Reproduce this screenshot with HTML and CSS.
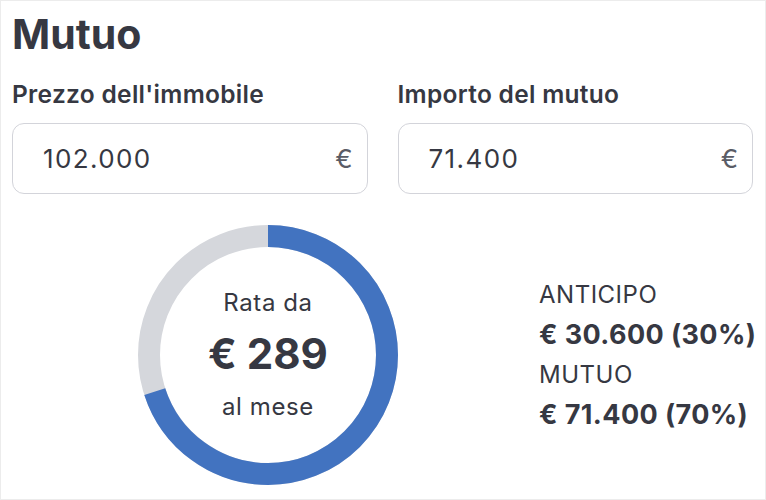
FILE: index.html
```html
<!DOCTYPE html>
<html lang="it">
<head>
<meta charset="utf-8">
<title>Mutuo</title>
<link rel="stylesheet" href="styles.css">
</head>
<body>
<div class="page">
  <h1 class="title">Mutuo</h1>
  <div class="fields">
    <div class="field">
      <div class="label">Prezzo dell'immobile</div>
      <div class="input"><span class="value">102.000</span><span class="cur">€</span></div>
    </div>
    <div class="field">
      <div class="label">Importo del mutuo</div>
      <div class="input"><span class="value">71.400</span><span class="cur">€</span></div>
    </div>
  </div>
  <div class="summary">
    <div class="donut">
      <svg class="ring" width="260" height="260" viewBox="0 0 260 260">
        <circle cx="130" cy="130" r="119" fill="none" stroke="#d5d7dc" stroke-width="22"/>
        <circle cx="130" cy="130" r="119" fill="none" stroke="#4273c0" stroke-width="22"
          stroke-dasharray="523.4 747.7" transform="rotate(-90 130 130)"/>
      </svg>
      <div class="center">
        <div class="small">Rata da</div>
        <div class="big">€ 289</div>
        <div class="small">al mese</div>
      </div>
    </div>
    <div class="legend">
      <div class="lg-label">ANTICIPO</div>
      <div class="lg-value">€ 30.600 (30%)</div>
      <div class="lg-label">MUTUO</div>
      <div class="lg-value">€ 71.400 (70%)</div>
    </div>
  </div>
</div>
</body>
</html>
```
FILE: styles.css
```css
html, body {
  margin: 0;
  padding: 0;
  background: #ffffff;
}
body {
  font-family: Inter, "Noto Sans", sans-serif;
  color: #363842;
}
.page {
  box-sizing: border-box;
  width: 766px;
  height: 500px;
  border: 1px solid #ececec;
  padding: 8px 12px 0 11px;
  overflow: hidden;
}
.title {
  margin: 0;
  font-size: 41px;
  line-height: 50px;
  font-weight: 700;
}
.fields {
  display: flex;
  gap: 30px;
  margin-top: 20px;
}
.field {
  flex: 1;
}
.label {
  font-size: 24.5px;
  line-height: 30px;
  font-weight: 600;
  letter-spacing: 0.3px;
}
.input {
  margin-top: 14px;
  box-sizing: border-box;
  height: 71px;
  border: 1.5px solid #d3d4da;
  border-radius: 12px;
  display: flex;
  align-items: center;
  justify-content: space-between;
  padding: 0 14px 0 30px;
  font-size: 26px;
}
.value {
  color: #363842;
  letter-spacing: 1.4px;
}
.cur {
  color: #5a5c66;
  font-size: 26px;
}
.summary {
  display: flex;
  align-items: center;
  gap: 141px;
  margin-top: 31px;
  padding-left: 126px;
}
.donut {
  flex: none;
  position: relative;
  width: 260px;
  height: 260px;
}
.ring {
  display: block;
}
.center {
  position: absolute;
  inset: 0;
  display: flex;
  flex-direction: column;
  align-items: center;
  justify-content: center;
}
.small {
  font-size: 24px;
  line-height: 30px;
  letter-spacing: 0.6px;
}
.big {
  font-size: 42px;
  line-height: 56px;
  font-weight: 700;
  margin: 8px 0 10px;
}
.legend {
  flex: none;
  display: flex;
  flex-direction: column;
  white-space: nowrap;
}
.lg-label {
  font-size: 24px;
  line-height: 40px;
  letter-spacing: 0.5px;
}
.lg-value {
  font-size: 27px;
  line-height: 40px;
  font-weight: 700;
  letter-spacing: 0.4px;
}
```
